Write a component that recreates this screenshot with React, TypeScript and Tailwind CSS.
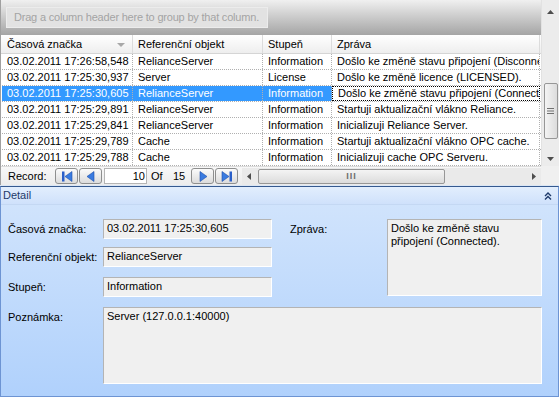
import React from "react"

const rows = [
  ["03.02.2011 17:26:58,548", "RelianceServer", "Information", "Došlo ke změně stavu připojení (Disconne"],
  ["03.02.2011 17:25:30,937", "Server", "License", "Došlo ke změně licence (LICENSED)."],
  ["03.02.2011 17:25:30,605", "RelianceServer", "Information", "Došlo ke změně stavu připojení (Connect."],
  ["03.02.2011 17:25:29,891", "RelianceServer", "Information", "Startuji aktualizační vlákno Reliance."],
  ["03.02.2011 17:25:29,841", "RelianceServer", "Information", "Inicializuji Reliance Server."],
  ["03.02.2011 17:25:29,789", "Cache", "Information", "Startuji aktualizační vlákno OPC cache."],
  ["03.02.2011 17:25:29,788", "Cache", "Information", "Inicializuji cache OPC Serveru."],
]

const widths = ["w-[131px]", "w-[130px]", "w-[69px]", "w-[208px]"]

function NavButton({ dir, bar }: { dir: "left" | "right"; bar?: boolean }) {
  return (
    <div className="w-[23px] h-[16px] rounded-[3px] border border-[#8e8f8f] bg-gradient-to-b from-[#fbfbfb] to-[#dcdcdc] flex items-center justify-center">
      <svg width="12" height="11" viewBox="0 0 12 11">
        {dir === "left" ? (
          <>
            {bar && <rect x="1" y="0.5" width="2.5" height="10" fill="#2a5fc9" />}
            <polygon points={bar ? "11,0.5 11,10.5 4,5.5" : "9,0.5 9,10.5 2,5.5"} fill="#3a7be0" stroke="#1f4fa8" strokeWidth="0.6" />
          </>
        ) : (
          <>
            <polygon points={bar ? "1,0.5 1,10.5 8,5.5" : "3,0.5 3,10.5 10,5.5"} fill="#3a7be0" stroke="#1f4fa8" strokeWidth="0.6" />
            {bar && <rect x="8.5" y="0.5" width="2.5" height="10" fill="#2a5fc9" />}
          </>
        )}
      </svg>
    </div>
  )
}

function Arrow({ dir }: { dir: "up" | "down" | "left" | "right" }) {
  const pts = {
    up: "0,4 7,4 3.5,0",
    down: "0,0 7,0 3.5,4",
    left: "4,0 4,7 0,3.5",
    right: "0,0 0,7 4,3.5",
  }[dir]
  const vertical = dir === "up" || dir === "down"
  return (
    <svg width={vertical ? 7 : 4} height={vertical ? 4 : 7} viewBox={vertical ? "0 0 7 4" : "0 0 4 7"}>
      <polygon points={pts} fill="#4d4d4d" />
    </svg>
  )
}

function Field({ label, value, h = "h-[20px]" }: { label: string; value: string; h?: string }) {
  return (
    <div className="flex">
      <div className="w-[95px] pt-[4px] text-black">{label}</div>
      <div className={`flex-1 ${h} bg-[#f0f0f0] border border-t-[#b4b4b4] border-l-[#b4b4b4] border-r-white border-b-white px-[3px] pt-[2px] text-black`}>
        {value}
      </div>
    </div>
  )
}

export default function App() {
  return (
    <div className="w-[559px] h-[397px] bg-[#dbe6f4] font-['Liberation_Sans',Arial,sans-serif] text-[11px] leading-[13px] overflow-hidden flex flex-col">
      {/* grid */}
      <div className="h-[185px] flex bg-white border-l border-[#a0a0a0]">
        <div className="w-[540px] flex flex-col">
          <div className="h-[35px] bg-gradient-to-b from-[#f0f0f0] to-[#a5a5a5] pl-[5px] pt-[7px]">
            <div className="w-[262px] h-[21px] bg-[#e2e2e2] border border-[#ececec] text-[#a4a4a4] flex items-center pl-[7px] whitespace-nowrap overflow-hidden tracking-[-0.2px]">
              Drag a column header here to group by that column.
            </div>
          </div>
          <div className="h-[19px] flex pl-[1px] bg-gradient-to-b from-white to-[#eeeeee] border-b border-[#d5d5d5]">
            {["Časová značka", "Referenční objekt", "Stupeň", "Zpráva"].map((h, i) => (
              <div key={h} className={`${widths[i]} flex items-center pl-[5px] border-r border-[#dcdcdc] relative`}>
                {h}
                {i === 0 && (
                  <svg className="absolute left-[115px] top-[8px]" width="8" height="4" viewBox="0 0 8 4">
                    <polygon points="0,0 8,0 4,4" fill="#a8a8a8" />
                  </svg>
                )}
              </div>
            ))}
          </div>
          <div className="h-[112px] flex flex-col pl-[1px]">
            {rows.map((r, ri) => {
              const sel = ri === 2
              return (
                <div key={ri} className="h-[16px] flex border-b border-dotted border-[#b0b0b0]">
                  {r.map((c, ci) => {
                    const focus = sel && ci === 3
                    return (
                      <div
                        key={ci}
                        className={`${widths[ci]} flex items-center pl-[5px] whitespace-nowrap overflow-hidden ${
                          focus
                            ? "bg-white text-black border border-dotted border-black"
                            : sel
                            ? "bg-[#3399ff] text-white border-r border-dotted border-[#b0b0b0]"
                            : "text-black border-r border-dotted border-[#b0b0b0]"
                        }`}
                      >
                        {c}
                      </div>
                    )
                  })}
                </div>
              )
            })}
          </div>
          <div className="h-[19px] flex items-center bg-gradient-to-b from-[#f8f8f8] to-[#ececec] border-t border-[#dcdcdc]">
            <div className="w-[54px] pl-[7px] text-black">Record:</div>
            <NavButton dir="left" bar />
            <div className="w-[1px]" />
            <NavButton dir="left" />
            <div className="ml-[2px] w-[43px] h-[16px] bg-white border border-[#b5b5b5] text-right pr-[1px] text-black leading-[14px]">10</div>
            <div className="ml-[4px] w-[22px] text-black">Of</div>
            <div className="w-[18px] text-black">15</div>
            <NavButton dir="right" />
            <div className="w-[1px]" />
            <NavButton dir="right" bar />
            <div className="ml-[4px] flex-1 h-[17px] bg-[#eaeaea] flex items-center">
              <div className="w-[14px] flex justify-center"><Arrow dir="left" /></div>
              <div className="ml-[2px] w-[187px] h-[15px] rounded-[2px] border border-[#979797] bg-gradient-to-b from-[#f4f4f4] to-[#dcdcdc] flex items-center justify-center">
                <span className="text-[9px] leading-[9px] text-[#6e6e6e] tracking-[1px] font-bold">III</span>
              </div>
              <div className="flex-1" />
              <div className="w-[14px] flex justify-center"><Arrow dir="right" /></div>
            </div>
          </div>
        </div>
        <div className="w-[18px] flex flex-col">
          <div className="h-[166px] bg-[#ececec] flex flex-col items-center border-l border-[#e2e2e2]">
            <div className="mt-[10px] h-[6px]"><Arrow dir="up" /></div>
            <div className="mt-[67px] w-[14px] h-[56px] rounded-[2px] border border-[#979797] bg-gradient-to-r from-[#f4f4f4] to-[#dcdcdc] flex items-center justify-center">
              <svg width="7" height="6" viewBox="0 0 7 6">
                <rect x="0" y="0" width="7" height="1" fill="#707070" />
                <rect x="0" y="2.5" width="7" height="1" fill="#707070" />
                <rect x="0" y="5" width="7" height="1" fill="#707070" />
              </svg>
            </div>
            <div className="mt-[18px]"><Arrow dir="down" /></div>
          </div>
          <div className="flex-1 bg-[#f0f0f0]" />
        </div>
      </div>
      <div className="h-[1px] bg-[#dbe6f4]" />
      {/* detail */}
      <div className="flex-1 flex flex-col border border-[#6d94d3] border-t-[#35598f] bg-gradient-to-b from-[#d3e5fc] to-[#b0d1fc]">
        <div className="h-[18px] flex items-center justify-between pl-[2px] pr-[6px] bg-gradient-to-b from-[#e2eefd] to-[#cfe1fb] border-b border-[#c4d8f3] text-[#1e3a6a]">
          <span>Detail</span>
          <svg width="8" height="8" viewBox="0 0 8 8">
            <polyline points="1,4 4,1 7,4" fill="none" stroke="#1e3a6a" strokeWidth="1.4" />
            <polyline points="1,7.5 4,4.5 7,7.5" fill="none" stroke="#1e3a6a" strokeWidth="1.4" />
          </svg>
        </div>
        <div className="pl-[7px] pr-[16px] pt-[14px] flex flex-col gap-[10px]">
          <div className="flex">
            <div className="w-[264px] flex flex-col gap-[8px]">
              <Field label="Časová značka:" value="03.02.2011 17:25:30,605" />
              <Field label="Referenční objekt:" value="RelianceServer" />
              <div className="pt-[2px]">
                <Field label="Stupeň:" value="Information" />
              </div>
            </div>
            <div className="ml-[18px] w-[97px] pt-[4px] text-black">Zpráva:</div>
            <div className="flex-1 h-[77px] bg-[#f0f0f0] border border-t-[#b4b4b4] border-l-[#b4b4b4] border-r-white border-b-white px-[3px] pt-[2px] text-black">
              Došlo ke změně stavu
              <br />
              připojení (Connected).
            </div>
          </div>
          <Field label="Poznámka:" value="Server (127.0.0.1:40000)" h="h-[77px]" />
        </div>
      </div>
    </div>
  )
}
